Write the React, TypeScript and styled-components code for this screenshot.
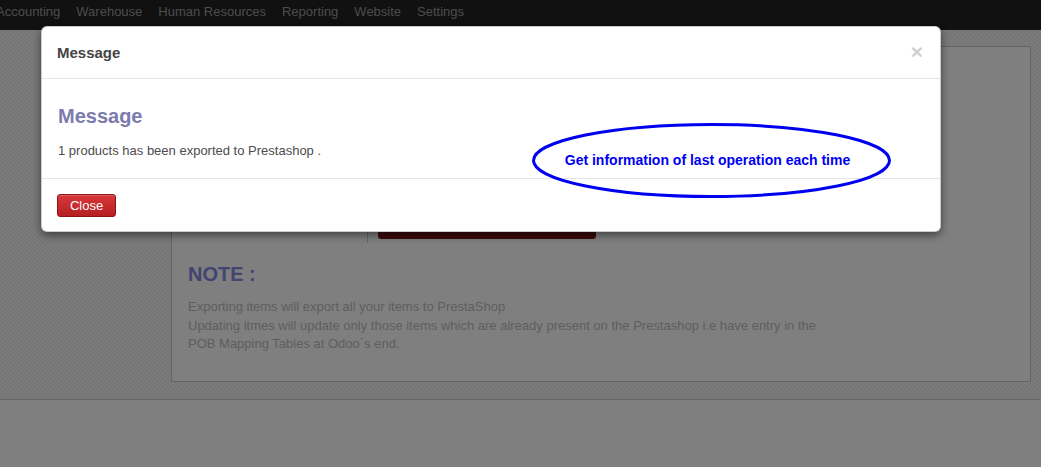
import React from "react";
import styled, { createGlobalStyle } from "styled-components";

const GlobalStyle = createGlobalStyle`
  html, body {
    margin: 0;
    padding: 0;
    background: #ffffff;
    font-family: "Liberation Sans", Arial, sans-serif;
    overflow: hidden;
  }
`;

const Page = styled.div`
  position: relative;
  width: 1041px;
  height: 467px;
  overflow: hidden;
`;

const NavBar = styled.div`
  height: 30px;
  box-sizing: border-box;
  padding-top: 4px;
  background: #222;
  display: flex;
  align-items: flex-start;
  gap: 16px;
  margin-left: -4px;
`;

const NavItem = styled.span`
  font-size: 13px;
  line-height: 16px;
  color: #999;
`;

const Content = styled.div`
  height: 353px;
  padding-top: 16px;
  border-bottom: 1px solid #ccc;
  background-color: #f2f2f2;
  background-image: repeating-conic-gradient(#ececec 0% 25%, #f6f6f6 0% 50%);
  background-size: 4px 4px;
`;

const Sheet = styled.div`
  margin-left: 171px;
  width: 826px;
  height: 302px;
  background: #fff;
  border: 1px solid #c8c8c8;
  padding: 16px 16px;
`;

const FormGrid = styled.div`
  display: grid;
  grid-template-columns: 180px 1fr;
  height: 180px;
`;

const LabelCell = styled.div`
  border-right: 1px solid #ccc;
`;

const ActionCell = styled.div`
  display: flex;
  flex-direction: column;
  justify-content: flex-end;
  padding-left: 10px;
  padding-bottom: 4px;
`;

const DarkButton = styled.div`
  width: 218px;
  height: 28px;
  border-radius: 3px;
  background: #741616;
`;

const NoteTitle = styled.h2`
  margin: 20px 0 0;
  font-size: 20px;
  line-height: 22px;
  font-weight: bold;
  color: #8688e4;
`;

const NoteText = styled.p`
  margin: 13px 0 0;
  font-size: 13px;
  line-height: 18.5px;
  color: #bdbdbd;
`;

const Backdrop = styled.div`
  position: absolute;
  inset: 0;
  background: rgba(0, 0, 0, 0.5);
`;

const Modal = styled.div`
  position: absolute;
  left: 41px;
  top: 26px;
  width: 898px;
  height: 204px;
  background: #fff;
  border: 1px solid rgba(0, 0, 0, 0.2);
  border-radius: 6px;
  box-shadow: 0 3px 9px rgba(0, 0, 0, 0.5);
  display: flex;
  flex-direction: column;
`;

const ModalHeader = styled.div`
  height: 51px;
  border-bottom: 1px solid #e5e5e5;
  display: flex;
  align-items: center;
  justify-content: space-between;
  padding: 0 17px 0 15px;
`;

const ModalTitle = styled.span`
  font-size: 15px;
  font-weight: bold;
  color: #444;
`;

const CloseX = styled.span`
  font-size: 21px;
  font-weight: bold;
  line-height: 1;
  color: #d0d0d0;
  margin-top: -2px;
`;

const ModalBody = styled.div`
  height: 99px;
  border-bottom: 1px solid #e5e5e5;
  padding: 0 16px;
`;

const BodyTitle = styled.h3`
  margin: 25px 0 0;
  font-size: 20px;
  line-height: 24px;
  font-weight: bold;
  color: #7c7bad;
`;

const BodyText = styled.p`
  margin: 15px 0 0;
  font-size: 13px;
  line-height: 16px;
  color: #4c4c4c;
`;

const ModalFooter = styled.div`
  flex: 1;
  padding: 15px 15px 0;
`;

const DangerButton = styled.button`
  width: 59px;
  height: 23px;
  padding: 0;
  border: 1px solid #8a1616;
  border-radius: 3px;
  background: linear-gradient(#d9383a, #b61f22);
  color: #fff;
  font-family: "Liberation Sans", Arial, sans-serif;
  font-size: 13px;
  box-shadow: inset 0 1px 0 rgba(255, 255, 255, 0.2);
`;

const Annotation = styled.div`
  position: absolute;
  left: 531px;
  top: 122px;
  width: 361px;
  height: 77px;
  display: flex;
  align-items: center;
  justify-content: center;
`;

const AnnotationShape = styled.svg`
  position: absolute;
  inset: 0;
`;

const AnnotationLabel = styled.span`
  position: relative;
  font-size: 14px;
  font-weight: bold;
  color: #0000f0;
  margin-left: -8px;
  margin-top: -2px;
`;

const navItems = [
  "Accounting",
  "Warehouse",
  "Human Resources",
  "Reporting",
  "Website",
  "Settings",
];

export default function App() {
  return (
    <Page>
      <GlobalStyle />
      <NavBar>
        {navItems.map((n) => (
          <NavItem key={n}>{n}</NavItem>
        ))}
      </NavBar>
      <Content>
        <Sheet>
          <FormGrid>
            <LabelCell />
            <ActionCell>
              <DarkButton />
            </ActionCell>
          </FormGrid>
          <NoteTitle>NOTE :</NoteTitle>
          <NoteText>
            Exporting items will export all your items to PrestaShop
            <br />
            Updating itmes will update only those items which are already
            present on the Prestashop i.e have entry in the
            <br />
            POB Mapping Tables at Odoo`s end.
          </NoteText>
        </Sheet>
      </Content>
      <Backdrop />
      <Modal>
        <ModalHeader>
          <ModalTitle>Message</ModalTitle>
          <CloseX>×</CloseX>
        </ModalHeader>
        <ModalBody>
          <BodyTitle>Message</BodyTitle>
          <BodyText>1 products has been exported to Prestashop .</BodyText>
        </ModalBody>
        <ModalFooter>
          <DangerButton>Close</DangerButton>
        </ModalFooter>
      </Modal>
      <Annotation>
        <AnnotationShape width="361" height="77" viewBox="0 0 361 77">
          <ellipse
            cx="180.5"
            cy="38.5"
            rx="178"
            ry="36"
            fill="none"
            stroke="#0000f0"
            strokeWidth="3"
          />
        </AnnotationShape>
        <AnnotationLabel>Get information of last operation each time</AnnotationLabel>
      </Annotation>
    </Page>
  );
}
